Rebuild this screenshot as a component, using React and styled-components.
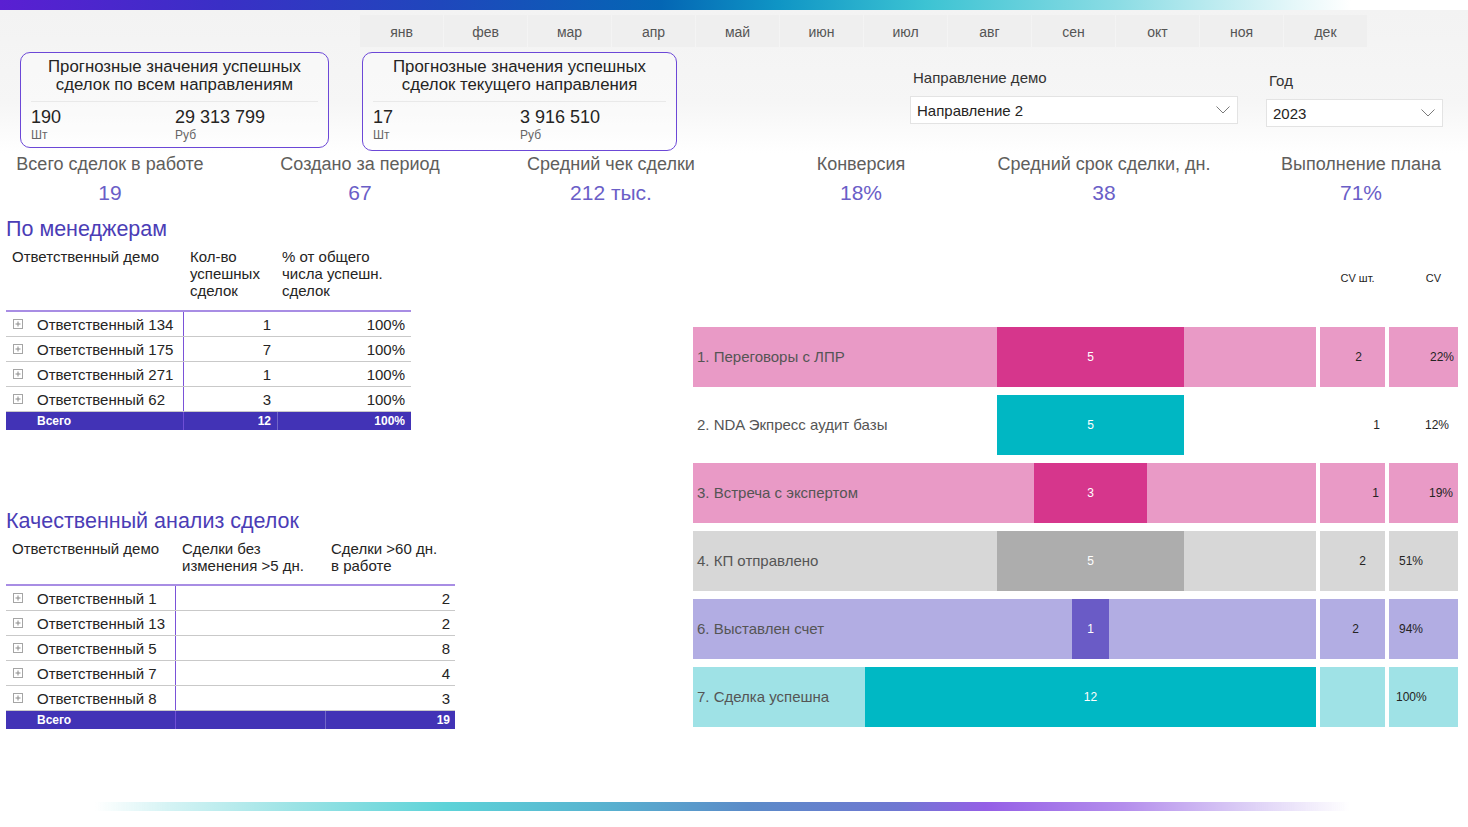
import React from "react";
import styled, { createGlobalStyle } from "styled-components";

const Global = createGlobalStyle`
  html, body { margin: 0; padding: 0; background: #fff; }
  body { font-family: "Liberation Sans", Arial, sans-serif; color: #252423; }
  * { box-sizing: border-box; }
`;

const Page = styled.div`
  width: 1468px;
  height: 827px;
  overflow: hidden;
  background: #fff;
  display: flex;
  flex-direction: column;
`;

const TopStripe = styled.div`
  flex: none;
  height: 10px;
  background: linear-gradient(90deg, #5a1fd2 0%, #3a2fc6 15%, #1f47bc 30%, #0466b4 45%, #0f95c5 53%, #3cc3d3 63%, #8adce4 76%, #e4f7f9 88%, #ffffff 92%);
  box-shadow: 0 1px 2px rgba(0, 0, 0, 0.08);
`;

const Header = styled.div`
  flex: none;
  height: 143px;
  padding-top: 5px;
  background: linear-gradient(180deg, #f3f3f3 0%, #f6f6f6 65%, #ffffff 100%);
`;

const MonthRow = styled.div`
  display: grid;
  grid-template-columns: repeat(12, 83px);
  column-gap: 1px;
  margin-left: 360px;
  width: 1007px;
`;

const MonthCell = styled.div`
  height: 32px;
  padding-top: 1px;
  background: #efefef;
  color: #555;
  font-size: 14px;
  display: flex;
  align-items: center;
  justify-content: center;
`;

const CardsRow = styled.div`
  display: flex;
  align-items: flex-start;
  margin-top: 5px;
  padding-left: 20px;
`;

const Card = styled.div`
  flex: none;
  width: ${(p) => p.$w}px;
  height: ${(p) => p.$h}px;
  margin-left: ${(p) => p.$ml || 0}px;
  border: 1.5px solid #6c48d7;
  border-radius: 10px;
  background: rgba(255, 255, 255, 0.35);
  padding-top: 5px;
`;

const CardTitle = styled.div`
  font-size: 16.8px;
  line-height: 18px;
  text-align: center;
  color: #252423;
`;

const CardDivider = styled.div`
  height: 1px;
  margin: 7px 10px 0;
  background: #e9e9e9;
`;

const CardValues = styled.div`
  display: grid;
  grid-template-columns: ${(p) => p.$col}px 1fr;
  padding: 5px 0 0 10px;
`;

const ValueNum = styled.div`
  font-size: 18px;
  line-height: 20px;
  color: #252423;
`;

const ValueUnit = styled.div`
  margin-top: 1px;
  font-size: 12px;
  line-height: 14px;
  color: #666;
`;

const Filter = styled.div`
  flex: none;
  width: ${(p) => p.$w}px;
  margin-left: ${(p) => p.$ml}px;
  margin-top: ${(p) => p.$mt}px;
`;

const FilterLabel = styled.div`
  font-size: 15px;
  line-height: 16px;
  color: #333;
  padding-left: 3px;
`;

const FilterBox = styled.div`
  margin-top: 10px;
  height: 28px;
  border: 1px solid #e3e3e3;
  background: #fff;
  padding: 0 7px 0 6px;
  display: flex;
  align-items: center;
  justify-content: space-between;
  font-size: 15px;
  color: #252423;
`;

const Chevron = () => (
  <svg width="14" height="8" viewBox="0 0 14 8">
    <polyline points="0.5,0.5 7,7 13.5,0.5" fill="none" stroke="#7a7a7a" strokeWidth="1" />
  </svg>
);

const KpiRow = styled.div`
  display: grid;
  grid-template-columns: 250px 250px 252px 248px 238px 276px;
  margin-left: -15px;
`;

const Kpi = styled.div`
  display: flex;
  flex-direction: column;
  align-items: center;
`;

const KpiLabel = styled.div`
  font-size: 18px;
  line-height: 22px;
  color: #605e5c;
  white-space: nowrap;
`;

const KpiValue = styled.div`
  margin-top: 6px;
  font-size: 21px;
  line-height: 24px;
  color: #6a5ec7;
`;

const Main = styled.div`
  display: grid;
  grid-template-columns: 693px 765px;
  margin-top: 12px;
`;

const LeftCol = styled.div`
  padding-left: 6px;
`;

const SectionTitle = styled.div`
  font-size: 21.5px;
  line-height: 24px;
  color: #4b3db6;
  margin-top: ${(p) => p.$mt || 0}px;
`;

const Table = styled.div`
  margin-top: 7px;
  width: ${(p) => p.$w}px;
`;

const HeadRow = styled.div`
  display: grid;
  grid-template-columns: ${(p) => p.$cols};
  height: ${(p) => p.$h}px;
  border-bottom: 2px solid #a88de4;
`;

const HeadCell = styled.div`
  font-size: 15px;
  line-height: 17px;
  color: #252423;
  padding-left: ${(p) => p.$pl}px;
`;

const BodyRow = styled.div`
  display: grid;
  grid-template-columns: ${(p) => p.$cols};
  height: 25px;
  border-bottom: 1px solid #c9c9c9;
  font-size: 15px;
  color: #252423;
`;

const NameCell = styled.div`
  display: flex;
  align-items: center;
  gap: 14px;
  padding-left: 7px;
  white-space: nowrap;
`;

const NumCell = styled.div`
  display: flex;
  align-items: center;
  justify-content: flex-end;
  padding-right: ${(p) => p.$pr || 6}px;
  border-left: ${(p) => (p.$divider ? "1px solid #7a52d8" : "none")};
`;

const TotalRow = styled.div`
  display: grid;
  grid-template-columns: ${(p) => p.$cols};
  height: 18px;
  background: #4233b6;
  color: #fff;
  font-size: 12px;
  font-weight: bold;
`;

const TotalCell = styled.div`
  display: flex;
  align-items: center;
  justify-content: ${(p) => (p.$right ? "flex-end" : "flex-start")};
  padding-left: ${(p) => p.$pl || 0}px;
  padding-right: ${(p) => p.$pr || 0}px;
  border-left: ${(p) => p.$border || "none"};
`;

const ExpandIcon = () => (
  <svg width="10" height="10" viewBox="0 0 10 10" style={{ flex: "none" }}>
    <rect x="0.5" y="0.5" width="9" height="9" fill="#fff" stroke="#a5a5a5" strokeWidth="1" />
    <line x1="2.5" y1="5" x2="7.5" y2="5" stroke="#8a8a8a" strokeWidth="1" />
    <line x1="5" y1="2.5" x2="5" y2="7.5" stroke="#8a8a8a" strokeWidth="1" />
  </svg>
);

const RightCol = styled.div`
  display: flex;
  flex-direction: column;
`;

const FunnelGrid = styled.div`
  display: grid;
  grid-template-columns: 623px 65px 69px;
  column-gap: 4px;
`;

const CvHeadRow = styled(FunnelGrid)`
  margin-top: 54px;
  height: 14px;
`;

const CvHead = styled.div`
  grid-column: ${(p) => p.$col};
  font-size: 11px;
  line-height: 14px;
  color: #252423;
  text-align: center;
  padding-left: ${(p) => p.$pl}px;
`;

const Funnel = styled.div`
  margin-top: 42px;
  display: flex;
  flex-direction: column;
  gap: 8px;
`;

const FunnelRow = styled(FunnelGrid)`
  height: 60px;
`;

const StageBar = styled.div`
  display: grid;
  grid-template-columns: 172px 451px;
  background: ${(p) => p.$bg};
`;

const StageLabel = styled.div`
  align-self: center;
  padding-left: 4px;
  margin-top: -1px;
  font-size: 15px;
  color: #555;
  white-space: nowrap;
`;

const Track = styled.div`
  display: flex;
  justify-content: center;
`;

const Bar = styled.div`
  background: ${(p) => p.$color};
  color: #fff;
  font-size: 12px;
  display: flex;
  align-items: center;
  justify-content: center;
`;

const CvCell = styled.div`
  background: ${(p) => p.$bg};
  display: flex;
  align-items: center;
  justify-content: ${(p) => (p.$start ? "flex-start" : "flex-end")};
  padding-left: ${(p) => (p.$start ? p.$pad : 0)}px;
  padding-right: ${(p) => (p.$start ? 0 : p.$pad)}px;
  font-size: 12px;
  color: #252423;
`;

const BottomStripe = styled.div`
  flex: none;
  margin-top: 73px;
  margin-left: 95px;
  width: 1255px;
  height: 9px;
  background: linear-gradient(90deg, rgba(255,255,255,0) 0%, #d4f3f4 6%, #9be3e5 16%, #5dd3d8 28%, #58b4d0 40%, #5b8bc8 52%, #6f78d2 64%, #955fe6 71%, #b48eec 82%, #ddd0f6 92%, rgba(255,255,255,0) 100%);
  filter: blur(0.6px);
`;

const months = ["янв", "фев", "мар", "апр", "май", "июн", "июл", "авг", "сен", "окт", "ноя", "дек"];

const kpis = [
  ["Всего сделок в работе", "19"],
  ["Создано за период", "67"],
  ["Средний чек сделки", "212 тыс."],
  ["Конверсия", "18%"],
  ["Средний срок сделки, дн.", "38"],
  ["Выполнение плана", "71%"],
];

const managers = [
  ["Ответственный 134", "1", "100%"],
  ["Ответственный 175", "7", "100%"],
  ["Ответственный 271", "1", "100%"],
  ["Ответственный 62", "3", "100%"],
];

const quality = [
  ["Ответственный 1", "", "2"],
  ["Ответственный 13", "", "2"],
  ["Ответственный 5", "", "8"],
  ["Ответственный 7", "", "4"],
  ["Ответственный 8", "", "3"],
];

const PINK = "#e99ac6";
const PINK_D = "#d6368c";
const stages = [
  { label: "1. Переговоры с ЛПР", bg: PINK, bar: PINK_D, value: 5, cv: "2", cvPad: 23, cvBg: PINK, pct: "22%", pctPad: 4, pctStart: false },
  { label: "2. NDA Экпресс аудит базы", bg: "#ffffff", bar: "#00b7c3", value: 5, cv: "1", cvPad: 5, cvBg: "#ffffff", pct: "12%", pctPad: 9, pctStart: false },
  { label: "3. Встреча с экспертом", bg: PINK, bar: PINK_D, value: 3, cv: "1", cvPad: 6, cvBg: PINK, pct: "19%", pctPad: 5, pctStart: false },
  { label: "4. КП отправлено", bg: "#d7d7d7", bar: "#adadad", value: 5, cv: "2", cvPad: 19, cvBg: "#d7d7d7", pct: "51%", pctPad: 10, pctStart: true },
  { label: "6. Выставлен счет", bg: "#b2ade3", bar: "#6a5bc6", value: 1, cv: "2", cvPad: 26, cvBg: "#b2ade3", pct: "94%", pctPad: 10, pctStart: true },
  { label: "7. Сделка успешна", bg: "#9fe2e6", bar: "#00b8c4", value: 12, cv: "", cvPad: 0, cvBg: "#9fe2e6", pct: "100%", pctPad: 7, pctStart: true },
];
const MAX = 12;

const T1 = "177px 94px 134px";
const T2 = "169px 150px 130px";

export default function App() {
  return (
    <Page>
      <Global />
      <TopStripe />
      <Header>
        <MonthRow>
          {months.map((m) => (
            <MonthCell key={m}>{m}</MonthCell>
          ))}
        </MonthRow>
        <CardsRow>
          <Card $w={309} $h={96}>
            <CardTitle>
              Прогнозные значения успешных
              <br />
              сделок по всем направлениям
            </CardTitle>
            <CardDivider />
            <CardValues $col={144}>
              <div>
                <ValueNum>190</ValueNum>
                <ValueUnit>Шт</ValueUnit>
              </div>
              <div>
                <ValueNum>29 313 799</ValueNum>
                <ValueUnit>Руб</ValueUnit>
              </div>
            </CardValues>
          </Card>
          <Card $w={315} $h={99} $ml={33}>
            <CardTitle>
              Прогнозные значения успешных
              <br />
              сделок текущего направления
            </CardTitle>
            <CardDivider />
            <CardValues $col={147}>
              <div>
                <ValueNum>17</ValueNum>
                <ValueUnit>Шт</ValueUnit>
              </div>
              <div>
                <ValueNum>3 916 510</ValueNum>
                <ValueUnit>Руб</ValueUnit>
              </div>
            </CardValues>
          </Card>
          <Filter $w={328} $ml={233} $mt={18}>
            <FilterLabel>Направление демо</FilterLabel>
            <FilterBox>
              <span>Направление 2</span>
              <Chevron />
            </FilterBox>
          </Filter>
          <Filter $w={177} $ml={28} $mt={21}>
            <FilterLabel>Год</FilterLabel>
            <FilterBox>
              <span>2023</span>
              <Chevron />
            </FilterBox>
          </Filter>
        </CardsRow>
      </Header>

      <KpiRow>
        {kpis.map(([l, v]) => (
          <Kpi key={l}>
            <KpiLabel>{l}</KpiLabel>
            <KpiValue>{v}</KpiValue>
          </Kpi>
        ))}
      </KpiRow>

      <Main>
        <LeftCol>
          <SectionTitle>По менеджерам</SectionTitle>
          <Table $w={405}>
            <HeadRow $cols={T1} $h={64}>
              <HeadCell $pl={6}>Ответственный демо</HeadCell>
              <HeadCell $pl={7}>
                Кол-во
                <br />
                успешных
                <br />
                сделок
              </HeadCell>
              <HeadCell $pl={5}>
                % от общего
                <br />
                числа успешн.
                <br />
                сделок
              </HeadCell>
            </HeadRow>
            {managers.map(([n, c, p]) => (
              <BodyRow key={n} $cols={T1}>
                <NameCell>
                  <ExpandIcon />
                  {n}
                </NameCell>
                <NumCell $divider $pr={6}>{c}</NumCell>
                <NumCell $pr={6}>{p}</NumCell>
              </BodyRow>
            ))}
            <TotalRow $cols={T1}>
              <TotalCell $pl={31}>Всего</TotalCell>
              <TotalCell $right $pr={6} $border="1px solid #6f4fd6">12</TotalCell>
              <TotalCell $right $pr={6} $border="1px solid rgba(255,255,255,0.25)">100%</TotalCell>
            </TotalRow>
          </Table>

          <SectionTitle $mt={79}>Качественный анализ сделок</SectionTitle>
          <Table $w={449}>
            <HeadRow $cols={T2} $h={46}>
              <HeadCell $pl={6}>Ответственный демо</HeadCell>
              <HeadCell $pl={7}>
                Сделки без
                <br />
                изменения &gt;5 дн.
              </HeadCell>
              <HeadCell $pl={6}>
                Сделки &gt;60 дн.
                <br />в работе
              </HeadCell>
            </HeadRow>
            {quality.map(([n, a, b]) => (
              <BodyRow key={n} $cols={T2}>
                <NameCell>
                  <ExpandIcon />
                  {n}
                </NameCell>
                <NumCell $divider $pr={5}>{a}</NumCell>
                <NumCell $pr={5}>{b}</NumCell>
              </BodyRow>
            ))}
            <TotalRow $cols={T2}>
              <TotalCell $pl={31}>Всего</TotalCell>
              <TotalCell $right $pr={5} $border="1px solid #6f4fd6"></TotalCell>
              <TotalCell $right $pr={5} $border="1px solid rgba(255,255,255,0.25)">19</TotalCell>
            </TotalRow>
          </Table>
        </LeftCol>

        <RightCol>
          <CvHeadRow>
            <CvHead $col={2} $pl={10}>CV шт.</CvHead>
            <CvHead $col={3} $pl={20}>CV</CvHead>
          </CvHeadRow>
          <Funnel>
            {stages.map((s) => (
              <FunnelRow key={s.label}>
                <StageBar $bg={s.bg}>
                  <StageLabel>{s.label}</StageLabel>
                  <Track>
                    <Bar $color={s.bar} style={{ width: `${(s.value / MAX) * 100}%` }}>
                      {s.value}
                    </Bar>
                  </Track>
                </StageBar>
                <CvCell $bg={s.cvBg} $pad={s.cvPad}>{s.cv}</CvCell>
                <CvCell $bg={s.cvBg} $pad={s.pctPad} $start={s.pctStart}>{s.pct}</CvCell>
              </FunnelRow>
            ))}
          </Funnel>
        </RightCol>
      </Main>

      <BottomStripe />
    </Page>
  );
}
